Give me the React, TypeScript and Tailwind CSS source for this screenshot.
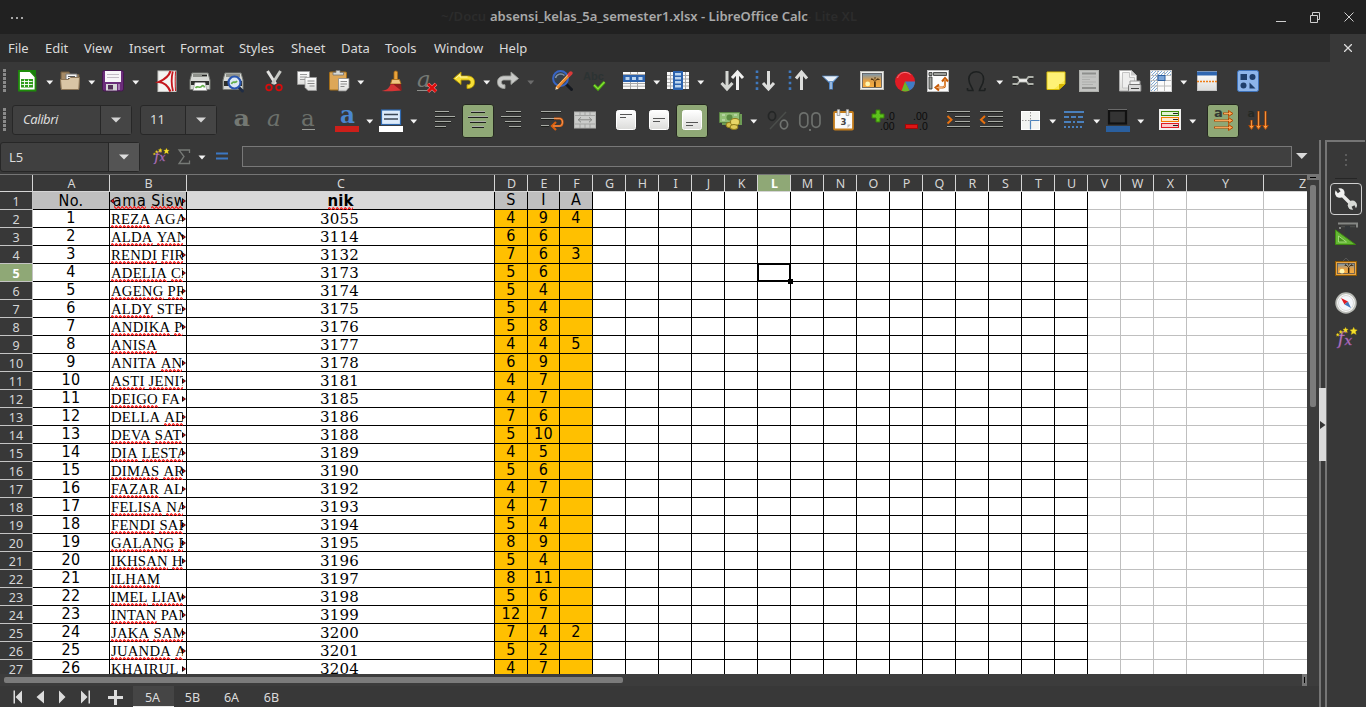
import type { ReactNode } from 'react';

type Kids = { children?: ReactNode };

/* ---------- small building blocks ---------- */

const Ico = ({ m, children }: Kids & { m: string }) => (
  <svg viewBox="0 0 24 24" className={`${m} h-6 w-6 shrink-0 overflow-visible`} fill="none">
    {children}
  </svg>
);

const Arrow = ({ m, dim }: { m: string; dim?: boolean }) => (
  <svg viewBox="0 0 8 24" className={`${m} h-6 w-2 shrink-0`}>
    <path d="M.3 11.5h6.9l-3.45 4z" fill={dim ? '#6c6c6c' : '#f4f4f4'} />
  </svg>
);

const Grip = () => (
  <svg viewBox="0 0 3 24" className="ml-[3px] h-6 w-[3px] shrink-0">
    {[0, 4, 8, 12, 16, 20].map((y) => (
      <rect key={y} y={y} width="3" height="3" fill="#8a8a8a" />
    ))}
  </svg>
);

const Active = ({ m, children }: Kids & { m: string }) => (
  <div className={`${m} -mt-1 flex h-[34px] w-8 shrink-0 justify-center rounded-[3px] border border-[#252820] bg-[#8fa876] pt-[3px]`}>
    {children}
  </div>
);

const Lines = ({ rows }: { rows: number[][] }) => (
  <>
    {rows.map(([x1, x2, y]) => (
      <g key={y}>
        <path d={`M${x1} ${y + 0.5}H${x2}`} stroke="#a9aca6" strokeWidth="1" />
        <path d={`M${x1} ${y + 1.5}H${x2}`} stroke="#1d1f1c" strokeWidth="1" />
      </g>
    ))}
  </>
);

const Picture = ({ x, y, w, h, frame }: { x: number; y: number; w: number; h: number; frame: string }) => (
  <>
    <rect x={x + 0.5} y={y + 0.5} width={w - 1} height={h - 1} fill={frame} stroke={frame === '#eeeeec' ? '#bdbdb8' : '#8f5902'} />
    <rect x={x + 2.5} y={y + 2.5} width={w - 5} height={h - 5} fill="url(#sunset)" stroke="#555" strokeWidth=".8" />
    <circle cx={x + w * 0.32} cy={y + h * 0.68} r="2.4" fill="#fff6b0" />
    <path
      d={`M${x + w * 0.62} ${y + h - 3}v-5.500l-3.500-3.500m3.500 3.500l3.500-3.500m-5 1.500h-2.500m4 0l.2-2.500m1.500 2.500h3`}
      stroke="#3b2408"
      strokeWidth=".8"
    />
    <path d={`M${x + w * 0.62} ${y + h - 3}v-5`} stroke="#3b2408" strokeWidth="1.400" />
  </>
);

const Defs = () => (
  <svg className="absolute h-0 w-0">
    <defs>
      <linearGradient id="sunset" x2="0" y2="1">
        <stop stopColor="#7796b0" />
        <stop offset=".5" stopColor="#e0a049" />
        <stop offset="1" stopColor="#fcaf3e" />
      </linearGradient>
      <linearGradient id="paper" x2="0" y2="1">
        <stop stopColor="#fff" />
        <stop offset="1" stopColor="#dcdcda" />
      </linearGradient>
      <pattern id="zig" width="4" height="3" patternUnits="userSpaceOnUse">
        <path d="M-1 3.200L1.200 .6 3.800 3.200 5.200 1.700" fill="none" stroke="#ff1414" strokeWidth="1.100" />
      </pattern>
      <pattern id="hatch" width="3" height="3" patternUnits="userSpaceOnUse">
        <path d="M0 3L3 0" stroke="#729fcf" strokeWidth=".9" />
      </pattern>
    </defs>
  </svg>
);

/* ---------- standard toolbar ---------- */

const StandardBar = () => (
  <div className="flex h-[39px] items-start pt-[7px]">
    <Grip />
    <Ico m="ml-[9px]">
      <path d="M4 2h11l5.500 6v13.500H4z" fill="#fff" stroke="#1e8c0a" strokeWidth="1.800" />
      <path d="M15 1h6v6z" fill="#18810b" />
      <rect x="6" y="10" width="12" height="8.500" fill="#2e9a1b" />
      <path d="M6.500 12.500h11M6.500 15.500h11M9.500 10.500v7.500M13.500 10.500v7.500" stroke="#fff" strokeWidth=".9" />
    </Ico>
    <Arrow m="ml-[7px]" />
    <Ico m="ml-1">
      <path d="M3 3h8l1.500 2.500H21V19H3z" fill="#a58a66" stroke="#6e5a3e" />
      <path d="M8 5h11v8H8z" fill="#f4f4f4" stroke="#777" />
      <path d="M10 7.500h7M10 9.500h7" stroke="#555" />
      <path d="M2.500 10.500h8l2-2h9l-.7 12H3.300z" fill="#d9c5a5" stroke="#8d7657" />
    </Ico>
    <Arrow m="ml-1.5" />
    <Ico m="ml-[5px]">
      <rect x="1.500" y="1.500" width="21" height="20.500" rx="2" fill="#6b2d7b" stroke="#44184f" />
      <rect x="4" y="2" width="16" height="11" fill="#f7f5f8" />
      <path d="M6 5.500h12M6 8.500h12" stroke="#c3bcc6" />
      <rect x="5" y="15" width="11" height="6.500" fill="#d7d7d7" />
      <rect x="7" y="16" width="5" height="4.500" fill="#523058" />
      <rect x="17" y="15" width="2" height="6" fill="#a779b3" />
    </Ico>
    <Arrow m="ml-[7px]" />
    <Ico m="ml-[15px]">
      <rect x="3" y="2" width="18" height="20.500" fill="#f3f3f1" stroke="#c9c9c6" />
      <path d="M15.500 2c-1.500 5-5 8-11.500 11 5 .5 9 4 11.500 9.500" stroke="#c4161c" strokeWidth="2.200" />
      <path d="M17.800 2.500c-1.500 6-1.500 13 .2 19.500" stroke="#c4161c" strokeWidth="1.800" />
      <path d="M20.500 2.500c-.4 6-.4 13 0 19.500" stroke="#c4161c" strokeWidth="1" />
    </Ico>
    <Ico m="ml-[9px]">
      <path d="M4 4h16l2 7v9.500H2V11z" fill="#d7d9d5" stroke="#777a75" />
      <path d="M5 5h14v3H5z" fill="#8d908a" />
      <path d="M14 6.500h5" stroke="#222" />
      <path d="M3 12h18v4H3z" fill="#2d2f2c" />
      <path d="M7 13.500h10l2 8H5z" fill="#fcfcfc" stroke="#999" strokeWidth=".7" />
      <path d="M7.500 19c2-3 4 1 6-1.500s3 1 3 1" stroke="#64b04b" strokeWidth="1.600" />
    </Ico>
    <Ico m="ml-[9px]">
      <path d="M4 4h16l2 7v9.500H2V11z" fill="#d7d9d5" stroke="#777a75" />
      <path d="M5 5h14v3H5z" fill="#8d908a" />
      <path d="M3 12h18v5H3z" fill="#2d2f2c" />
      <path d="M17.500 18l4 4" stroke="#1f2c44" strokeWidth="3" strokeLinecap="round" />
      <circle cx="13.500" cy="13.500" r="6" fill="#dbe8f4" stroke="#2a57b0" strokeWidth="2.200" />
      <path d="M10.500 15c1.500-4.500 3 .5 5.500-3" stroke="#64b04b" strokeWidth="1.800" />
    </Ico>
    <Ico m="ml-[17px]">
      <path d="M5.500 2l8.200 13" stroke="#e2e2e0" strokeWidth="3" />
      <path d="M18.500 2l-8.200 13" stroke="#c7c9c5" strokeWidth="3" />
      <circle cx="7" cy="18.500" r="2.800" stroke="#d40d0d" strokeWidth="1.800" />
      <circle cx="17" cy="18.500" r="2.800" stroke="#d40d0d" strokeWidth="1.800" />
    </Ico>
    <Ico m="ml-[9px]">
      <path d="M2.500 2.500h12v13h-12z" fill="url(#paper)" stroke="#999" strokeWidth=".8" />
      <path d="M5 5.500h7M5 8h7M5 10.500h5" stroke="#9a9a9a" />
      <path d="M10 8.500h11.500v13H13l-3-3z" fill="url(#paper)" stroke="#999" strokeWidth=".8" />
      <path d="M12.500 12h7M12.500 14.500h7M14.500 17h5" stroke="#8a8a8a" />
    </Ico>
    <Ico m="ml-2">
      <rect x="2.500" y="3" width="17" height="18" rx="1" fill="#dda758" stroke="#a46e18" />
      <path d="M6 3.500h3v-2h4v2h3.500V6H6z" fill="#d6d8d4" stroke="#777" strokeWidth=".8" />
      <path d="M11.500 9.500h10.500v9L19 22h-7.500z" fill="url(#paper)" stroke="#888" strokeWidth=".8" />
      <path d="M13.500 12.500h6.500M13.500 15h6.500M13.500 17.500h4" stroke="#8a8a8a" />
    </Ico>
    <Arrow m="ml-1.5" />
    <Ico m="ml-[15px]">
      <rect x="14" y="2" width="3.500" height="9" rx="1.500" fill="#e9a33c" stroke="#a86c14" strokeWidth=".8" />
      <path d="M12 10.500h7.500l1.500 4.500H10.500z" fill="#efc481" stroke="#a86c14" strokeWidth=".8" />
      <path d="M10.500 15h10.500l.8 6.500H13z" fill="#8f1d1d" />
      <path d="M10.500 15.500h3l7.500 6c-8 1-13.500.8-19.500.5 6-1 7.500-3 9-6.500z" fill="#d63535" />
    </Ico>
    <Ico m="ml-[11px]">
      <text x="2" y="18" fontFamily="DejaVu Serif" fontStyle="italic" fontSize="23" fill="#757974">a</text>
      <path d="M2 21.500h10" stroke="#8f918d" />
      <path d="M13 15l8 7.500M21 15l-8 7.500" stroke="#f5a3a3" strokeWidth="3.600" />
      <path d="M13 15l8 7.500M21 15l-8 7.500" stroke="#de0c0c" strokeWidth="2.500" />
    </Ico>
    <Ico m="ml-[13px]">
      <path d="M1.500 9.500L9 3v4h6.500c4.500 0 7 2.500 7 6 0 4.200-2.500 6.500-7.500 6.500v-3.700c2.500 0 3.500-.8 3.500-2.600 0-1.600-1-2.200-3-2.200H9v4.500z" fill="#f7df37" stroke="#b79b00" strokeWidth=".9" />
      <path d="M3.500 9.500l4.500-4v2.500h7.500" stroke="#fff8b5" />
    </Ico>
    <Arrow m="ml-[7px]" />
    <Ico m="ml-[5px]">
      <path d="M22.500 9.500L15 3v4H8.500c-4.500 0-7 2.500-7 6 0 4.200 2.500 6.500 7.500 6.500v-3.700c-2.500 0-3.500-.8-3.500-2.600 0-1.600 1-2.200 3-2.200H15v4.500z" fill="#c9cac8" stroke="#9c9e9a" strokeWidth=".9" />
    </Ico>
    <Arrow m="ml-[7px]" dim />
    <Ico m="ml-[15px]">
      <path d="M16.500 15.500l5 5" stroke="#14181f" strokeWidth="3" strokeLinecap="round" />
      <circle cx="10.500" cy="9.500" r="7.400" fill="#36404c" stroke="#3764c4" strokeWidth="2" />
      <path d="M5.500 9c1-4 6-5.500 9-2.500" stroke="#7f90a4" strokeWidth="1.500" />
      <path d="M6.500 19.500L19 6" stroke="#e9862a" strokeWidth="3.200" />
      <path d="M19 6l1.800-1.800" stroke="#d93a3a" strokeWidth="3.800" strokeLinecap="round" />
      <path d="M7 17.500L18 5.800" stroke="#fbc27f" strokeWidth=".9" />
      <path d="M5.200 20.800l1-3 2 2z" fill="#f4e4c5" />
    </Ico>
    <Ico m="ml-[9px]">
      <text x="0" y="10.500" fontFamily="Liberation Sans" fontWeight="bold" fontSize="11" fill="#2c3333">Abc</text>
      <path d="M11 16l4 4L21.500 13" stroke="#4aa510" strokeWidth="3" />
      <path d="M11 16l4 4L21.500 13" stroke="#86e034" strokeWidth="1.200" />
    </Ico>
    <Ico m="ml-[15px]">
      <rect x="1" y="3" width="22" height="17" fill="#f8f8f8" />
      <path d="M1 5.500h22M1 14.500h22M1 17.200h22M8.500 3v17M15.500 3v17" stroke="#a8a8a8" />
      <rect x="1" y="6" width="22" height="7" fill="#2b62ae" />
      <path d="M3.500 8h4v3h-4zM10 8h4v3h-4zM16.500 8h4v3h-4z" fill="#b9d4f0" />
    </Ico>
    <Arrow m="ml-[7px]" />
    <Ico m="ml-[5px]">
      <rect x="1" y="3" width="22" height="17" fill="#f8f8f8" />
      <path d="M1 6.500h22M1 10h22M1 13.500h22M1 17h22M4.500 3v17M19.500 3v17" stroke="#a8a8a8" />
      <rect x="7" y="2" width="10" height="19" fill="#2b62ae" />
      <path d="M9 4h6v2.500H9zM9 8h6v2.500H9zM9 12h6v2.500H9zM9 16h6v2.500H9z" fill="#b9d4f0" />
    </Ico>
    <Arrow m="ml-[7px]" />
    <Ico m="ml-[15px]">
      <path d="M7 2v17M1.500 14L7 20l5.500-6" stroke="#d5d7d3" strokeWidth="3" />
      <path d="M17.500 21V4M12 9l5.500-6L23 9" stroke="#f1f1f0" strokeWidth="3" />
    </Ico>
    <Ico m="ml-[9px]">
      <path d="M4 1.500v20" stroke="#3f78bd" strokeWidth="2.600" strokeDasharray="2.600 3" />
      <path d="M15.500 2v17M10 14l5.500 6 5.500-6" stroke="#dcdddb" strokeWidth="3" />
    </Ico>
    <Ico m="ml-[9px]">
      <path d="M4 1.500v20" stroke="#3f78bd" strokeWidth="2.600" strokeDasharray="2.600 3" />
      <path d="M15.500 21V4M10 9.500L15.500 3 21 9.500" stroke="#dcdddb" strokeWidth="3" />
    </Ico>
    <Ico m="ml-[9px]">
      <path d="M3 7h17l-6 7v6.500h-4V14z" fill="#4f84c4" />
      <path d="M3.500 7h16L14 12.500H9.500z" fill="#e8f0f8" stroke="#5a86ba" strokeWidth=".7" />
      <path d="M12 13v7" stroke="#dfeaf5" />
    </Ico>
    <Ico m="ml-[17px]">
      <Picture x={0} y={2} w={24} h={19} frame="#eeeeec" />
    </Ico>
    <Ico m="ml-[9px]">
      <circle cx="12" cy="12.500" r="10" fill="#e01b24" />
      <path d="M12 12.500L22 12.500A10 10 0 0 1 16.500 21.500z" fill="#3f7cc4" />
      <path d="M12 12.500L16.500 21.500A10 10 0 0 1 8.500 21.800z" fill="#6cb62a" />
      <path d="M4.500 9a8 8 0 0 1 13-3.500" stroke="#f5797e" />
    </Ico>
    <Ico m="ml-[9px]">
      <rect x="1.500" y="1.500" width="21" height="21" fill="#fcfcfc" stroke="#bbb" />
      <path d="M3 3.500h3v3H3zM7.500 3.500h13v3h-13zM3 8h3v12H3z" fill="#9b9d99" stroke="#2f302e" strokeWidth=".8" />
      <path d="M19 9.500v6.500c0 1.500-1 2.500-2.500 2.500H10M16 12.500l3-3.500 3 3.500M13 15.500L9.500 18.500l3.500 3" stroke="#c75a05" strokeWidth="2" />
      <path d="M19 10v6c0 1.500-1 2.500-2.500 2.500h-6" stroke="#ffc78e" strokeWidth=".8" />
    </Ico>
    <Ico m="ml-3.5">
      <path d="M3.500 21.500H9C8.800 19 4.800 15.500 4.800 10 4.800 5.500 8 2.800 12.200 2.800S19.600 5.500 19.600 10c0 5.500-4 9-4.200 11.500h5.500M3.500 19v2.500M21 19v2.500" stroke="#1d2020" strokeWidth="1.600" />
    </Ico>
    <Arrow m="ml-[7.500px]" />
    <Ico m="ml-[7px]">
      <path d="M1.500 8h5l2 2.500h7l2-2.500h5M1.500 15h5l2-2.500h7l2 2.500h5" stroke="#aeb1aa" strokeWidth="1.900" />
      <path d="M8 11.500h8" stroke="#eeeeec" strokeWidth="2.500" />
      <path d="M2 9.500h3M18.500 9.500h3M2 16.500h3M18.500 16.500h3" stroke="#20211f" />
    </Ico>
    <Ico m="ml-[9px]">
      <path d="M3 3h18v12l-6 5.500H3z" fill="#fbe94d" stroke="#d8bb00" />
      <path d="M3.500 3.500h17v8L10 20H3.500z" fill="#fff487" opacity=".7" />
      <path d="M15 20.500V15h6z" fill="#d4b400" />
    </Ico>
    <Ico m="ml-[9px]">
      <rect x="2.500" y="1.500" width="19" height="21" fill="#c3c4c2" stroke="#aeb0ac" />
      <path d="M5 4.500h14M5 19h14" stroke="#8e8f8d" strokeWidth="2" />
      <path d="M5 8h14M5 10.500h8M5 13h14M5 15.500h11" stroke="#aeafad" />
    </Ico>
    <Ico m="ml-[17px]">
      <path d="M1.500 1.500h12l5 5V22h-17z" fill="url(#paper)" stroke="#aaa" />
      <path d="M4.500 3.500h7v5h5V19h-12z" fill="#eee" stroke="#c4c4c4" />
      <path d="M13 1.500v5h5.500z" fill="#c9c9c9" />
      <path d="M12 12h10v5H12z" fill="#f2f2f2" stroke="#999" />
      <rect x="10.500" y="15.500" width="12.500" height="7" rx="1" fill="#dadada" stroke="#777" />
      <path d="M13 19.500h8" stroke="#444" />
    </Ico>
    <Ico m="ml-[7px]">
      <rect x="1.500" y="1.500" width="21" height="21" fill="#fbfbfb" stroke="#ccc" />
      <rect x="2" y="2" width="6" height="20" fill="url(#hatch)" />
      <rect x="8" y="2" width="14" height="5" fill="url(#hatch)" />
      <path d="M8.500 2v20M15.500 2v20M2 6.500h20M2 11.500h20M2 17h20" stroke="#bcbcbc" />
      <rect x="9" y="6.500" width="7" height="5" fill="#7ba5d8" stroke="#2d5f9f" />
    </Ico>
    <Arrow m="ml-[7px]" />
    <Ico m="ml-[7px]">
      <rect x="2.500" y="2.500" width="19" height="19" fill="url(#paper)" stroke="#c4c4c4" />
      <rect x="2" y="2.500" width="20" height="4" fill="#2f66b0" />
      <path d="M2 12.500h20" stroke="#ee7d14" strokeWidth="1.300" strokeDasharray="2 1" />
    </Ico>
    <Ico m="ml-[17px]">
      <rect x="1.500" y="1.500" width="21" height="21" rx="2" fill="#8db5ea" stroke="#3d71b8" />
      <path d="M4.500 5h6.500v6H4.500z" fill="#1f3f6b" />
      <circle cx="16.500" cy="8" r="3" fill="#1f3f6b" />
      <circle cx="7.500" cy="16.500" r="3" fill="#1f3f6b" />
      <path d="M13.500 13.500l6 6h-6z" fill="#1f3f6b" />
    </Ico>
  </div>
);

/* ---------- formatting toolbar ---------- */

const Combo = ({ m, label, side, italic }: { m: string; label: string; side: string; italic?: boolean }) => (
  <div className={`${m} -mt-[3px] flex h-[30px] shrink-0 rounded-[3px] border border-[#272727] bg-[#404040]`}>
    <div className={`flex flex-1 items-center text-[13px] text-[#dcdcdc] ${italic ? 'pl-[10px] italic tracking-[-0.4px]' : 'pl-[9px]'}`}>{label}</div>
    <div className={`${side} flex items-center justify-center border-l border-[#272727] bg-[#454545]`}>
      <svg viewBox="0 0 10 6" className="h-1.5 w-2.5">
        <path d="M0 .5h10L5 5.500z" fill="#d4d4d4" />
      </svg>
    </div>
  </div>
);

const FormatBar = () => (
  <div className="flex h-[39px] items-start pt-[7px]">
    <Grip />
    <Combo m="ml-1.5 w-[120px]" label="Calibri" side="w-[31px]" italic />
    <Combo m="ml-2 w-[77px]" label="11" side="w-[31px]" />
    <Ico m="ml-[13px]">
      <text x="3.500" y="17.500" fontFamily="DejaVu Serif" fontWeight="bold" fontSize="22" textLength="16.500" lengthAdjust="spacingAndGlyphs" fill="#747873">a</text>
    </Ico>
    <Ico m="ml-[9px]">
      <text x="4" y="17.500" fontFamily="DejaVu Serif" fontStyle="italic" fontSize="23" fill="#6c706b">a</text>
    </Ico>
    <Ico m="ml-[9px]">
      <text x="5" y="17.500" fontFamily="DejaVu Serif" fontSize="23" fill="#6c706b">a</text>
      <path d="M6 21.500h13" stroke="#9b9d99" />
    </Ico>
    <Ico m="ml-[15px]">
      <text x="5" y="15" fontFamily="DejaVu Serif" fontWeight="bold" fontSize="24" textLength="15" lengthAdjust="spacingAndGlyphs" fill="#4a86cf">a</text>
      <rect y="18" width="24" height="6" fill="#cc1f1a" />
    </Ico>
    <Arrow m="ml-[7px]" />
    <Ico m="ml-[5px]">
      <rect x="2.500" y="2" width="19" height="14.500" fill="#dceafa" stroke="#2f69b0" strokeWidth="1.200" />
      <path d="M5 6.500h14M5 11h14" stroke="#3b4654" strokeWidth="1.600" />
      <rect y="18" width="24" height="6" fill="#fff" />
    </Ico>
    <Arrow m="ml-[7px]" />
    <Ico m="ml-[15px]">
      <Lines rows={[[2, 16, 3], [2, 22, 8], [2, 18, 13], [2, 13, 18]]} />
    </Ico>
    <Active m="ml-[5px]">
      <Ico m="">
        <Lines rows={[[5, 19, 3], [2, 22, 8], [4, 20, 13], [6, 18, 18]]} />
      </Ico>
    </Active>
    <Ico m="ml-1.5">
      <Lines rows={[[6, 21, 3], [1, 21, 8], [5, 21, 13], [9, 21, 18]]} />
    </Ico>
    <Ico m="ml-4">
      <Lines rows={[[1, 21, 3], [1, 16, 10], [1, 9, 17]]} />
      <path d="M14 10.500h5.500c4 0 4 7.500 0 7.500H13M16 14l-4 4 4 4" stroke="#d95f0e" strokeWidth="2.200" />
      <path d="M14 10.500h5.500c4 0 4 7.500 0 7.500H13" stroke="#fcb07a" strokeWidth=".7" />
    </Ico>
    <Ico m="ml-[9px]">
      <rect x="1.500" y="4" width="21" height="16" fill="#cbccca" stroke="#b3b4b2" />
      <path d="M2 7.500h20M2 16h20M7 4v3.500M12 4v3.500M17 4v3.500M7 16v4M12 16v4M17 16v4" stroke="#a3a4a2" />
      <path d="M5 11.800h14M8 9.300l-2.700 2.500L8 14.300M16 9.300l2.700 2.500-2.700 2.500" stroke="#858784" />
    </Ico>
    <Ico m="ml-[17px]">
      <rect x="2.500" y="2.500" width="19" height="19" rx="2" fill="url(#paper)" stroke="#fff" />
      <path d="M6 6.500h12M6 9.500h6" stroke="#555" />
    </Ico>
    <Ico m="ml-[9px]">
      <rect x="2.500" y="2.500" width="19" height="19" rx="2" fill="url(#paper)" stroke="#fff" />
      <path d="M6 10.500h12M6 13.500h7" stroke="#555" />
    </Ico>
    <Active m="ml-[5px]">
      <Ico m="">
        <rect x="2.500" y="2.500" width="19" height="19" rx="2" fill="url(#paper)" stroke="#fff" />
        <path d="M6 14.500h12M6 17.500h7" stroke="#555" />
      </Ico>
    </Active>
    <Ico m="ml-[11px]">
      <path d="M3 6h20v11H3z" fill="#6d9c55" />
      <path d="M.5 4.500h20v10h-20z" fill="#93bf76" stroke="#5b8645" />
      <circle cx="10.500" cy="9.500" r="3" fill="#5c8c42" />
      <path d="M3 7h3M3 12h3M15 7h3" stroke="#d5e7c8" />
      <ellipse cx="11" cy="17" rx="4" ry="2.800" fill="#d9c24a" stroke="#8d7a1a" />
      <ellipse cx="16" cy="14" rx="4.500" ry="3.500" fill="#e8d667" stroke="#8d7a1a" />
      <ellipse cx="15" cy="19" rx="4" ry="2.500" fill="#dfca58" stroke="#8d7a1a" />
    </Ico>
    <Arrow m="ml-[7px]" />
    <Ico m="ml-2">
      <path d="M4 21L20 4" stroke="#4b4e4b" strokeWidth="1.500" />
      <ellipse cx="6" cy="8" rx="3.600" ry="4.300" stroke="#242626" strokeWidth="1.700" />
      <ellipse cx="18" cy="16.500" rx="3.600" ry="4.300" stroke="#707370" strokeWidth="1.700" />
    </Ico>
    <Ico m="ml-2">
      <rect x="1.800" y="4.800" width="8" height="14.500" rx="4" stroke="#6d706d" strokeWidth="1.700" />
      <rect x="14" y="4.800" width="8" height="14.500" rx="4" stroke="#6d706d" strokeWidth="1.700" />
      <rect x="11" y="21" width="2" height="2" fill="#6d706d" />
    </Ico>
    <Ico m="ml-[9px]">
      <rect x="3" y="4" width="19" height="17.500" rx="1" fill="#fafafa" stroke="#c47d1c" strokeWidth="1.800" />
      <path d="M7.500 1.500v6M16.500 1.500v6" stroke="#eee" strokeWidth="2.600" />
      <path d="M6.200 2v5.500h2.600V2M15.200 2v5.500h2.600V2" stroke="#888" strokeWidth=".7" />
      <text x="9.500" y="16.500" fontFamily="DejaVu Sans" fontSize="8.500" fontWeight="bold" fill="#444">3</text>
      <path d="M16.500 20v-3.500H20z" fill="#bbb" />
    </Ico>
    <Ico m="ml-4">
      <path d="M5 2h4v4h4v4H9v4H5v-4H1V6h4z" fill="#5dc31c" stroke="#387f0a" />
      <text x="15" y="12" fontFamily="Liberation Sans" fontSize="10.500" fill="#0c0c0c">.0</text>
      <text x="9" y="22" fontFamily="Liberation Sans" fontSize="10.500" fill="#0c0c0c">.00</text>
    </Ico>
    <Ico m="ml-[9px]">
      <text x="9" y="12" fontFamily="Liberation Sans" fontSize="10.500" fill="#0c0c0c">.00</text>
      <text x="15" y="22" fontFamily="Liberation Sans" fontSize="10.500" fill="#0c0c0c">.0</text>
      <rect x="1.500" y="16.500" width="12" height="4" fill="#dd1515" stroke="#9d0808" />
    </Ico>
    <Ico m="ml-[18px]">
      <Lines rows={[[1, 24, 3], [9, 24, 8], [9, 24, 13], [1, 24, 18]]} />
      <path d="M1.500 8l4 3.800-4 3.700" stroke="#e8700c" strokeWidth="2" />
    </Ico>
    <Ico m="ml-[9px]">
      <Lines rows={[[1, 24, 3], [9, 24, 8], [9, 24, 13], [1, 24, 18]]} />
      <path d="M6 8l-4 3.800L6 15.500" stroke="#e8700c" strokeWidth="2" />
    </Ico>
    <Ico m="ml-4">
      <rect x="2.500" y="3.500" width="18" height="18" fill="#f3f4f2" stroke="#fff" />
      <path d="M11.500 4v9M3 12.500h9" stroke="#999" strokeDasharray="1.500 1.500" />
      <path d="M11.500 12.500h9M11.500 12.500v9" stroke="#4f83bb" strokeWidth="1.200" />
    </Ico>
    <Arrow m="ml-1.5" />
    <Ico m="ml-[5px]">
      <path d="M2 4h20" stroke="#4a80bd" strokeWidth="2" />
      <path d="M2 9h20" stroke="#4a80bd" strokeWidth="2" strokeDasharray="5 2" />
      <path d="M2 14h20" stroke="#4a80bd" strokeWidth="2" strokeDasharray="7 2 2 2" />
      <path d="M2 19h20" stroke="#4a80bd" strokeWidth="2" strokeDasharray="2 2" />
    </Ico>
    <Arrow m="ml-[7px]" />
    <Ico m="ml-[5px]">
      <rect x="3" y="2.500" width="17" height="13" fill="#343434" stroke="#111" strokeWidth="2.200" />
      <path d="M2 1.500h19" stroke="#6a6a6a" />
      <rect y="18" width="24" height="6" fill="#2a5f9e" />
    </Ico>
    <Arrow m="ml-[7px]" />
    <Ico m="ml-[13px]">
      <rect x="1" y="1" width="22" height="21" fill="#f0f0ef" />
      <rect x="3.500" y="3.500" width="17" height="4" fill="#e2f3d4" stroke="#3f8b09" />
      <rect x="3.500" y="9.500" width="17" height="4" fill="#ffe9cf" stroke="#f57900" />
      <rect x="3.500" y="15.500" width="17" height="4" fill="#fbc9cb" stroke="#e01b24" />
      <path d="M15 5.500h5M15 11.500h5M15 17.500h5" stroke="#222" />
    </Ico>
    <Arrow m="ml-[7px]" />
    <Active m="ml-2.5">
      <Ico m="">
        <text x="3" y="9" fontFamily="DejaVu Sans" fontWeight="bold" fontSize="13" fill="#333a33">a</text>
        <path d="M12 5.500h9M3 12.500h18M3 19.500h18" stroke="#b54c05" strokeWidth="2.200" />
        <path d="M17.500 2.500l4.500 3-4.500 3zM17.500 9.500l4.500 3-4.500 3zM17.500 16.500l4.500 3-4.500 3z" fill="#f7a04b" stroke="#b54c05" />
        <path d="M13 5.500h7M4 12.500h16M4 19.500h16" stroke="#ffad61" strokeWidth=".9" />
      </Ico>
    </Active>
    <Ico m="ml-[7px]">
      <text x="1.500" y="9" fontFamily="DejaVu Sans" fontWeight="bold" fontSize="11" fill="#252a25">a</text>
      <path d="M5.500 12v8M12.500 3v17M19.500 3v17" stroke="#b54c05" strokeWidth="2.200" />
      <path d="M2.800 17.500h5.400L5.500 21.500zM9.800 17.500h5.400L12.500 21.500zM16.800 17.500h5.400L19.500 21.500z" fill="#f7a04b" stroke="#b54c05" />
      <path d="M5.500 12.500v7M12.500 3.500v16M19.500 3.500v16" stroke="#ff9a40" strokeWidth=".9" />
    </Ico>
  </div>
);

/* ---------- formula bar ---------- */

const star = (x: number, y: number, r: number) =>
  `M${x} ${y - r}l${r * 0.3} ${r * 0.65} ${r * 0.7} ${r * 0.1}-${r * 0.5} ${r * 0.5} ${r * 0.2} ${r * 0.75}-${r * 0.7}-${r * 0.35}-${r * 0.7} ${r * 0.35} ${r * 0.2}-${r * 0.75}-${r * 0.5}-${r * 0.5} ${r * 0.7}-${r * 0.1}z`;

const Fx = ({ cls }: { cls: string }) => (
  <svg viewBox="0 0 22 22" className={`${cls} shrink-0 overflow-visible`}>
    <text x="2" y="17.500" fontFamily="DejaVu Serif" fontStyle="italic" fontSize="17" fill="#c48bce" stroke="#8d4f9d" strokeWidth=".5">f</text>
    <text x="9" y="18.500" fontFamily="DejaVu Serif" fontStyle="italic" fontSize="14" fill="#c48bce" stroke="#8d4f9d" strokeWidth=".5">x</text>
    <path d={`${star(18.5, 4, 3.8)}${star(10, 3, 2.7)}${star(5, 5, 1.8)}${star(1.8, 8, 1.6)}`} fill="#f5df2d" stroke="#c9ac00" strokeWidth=".4" />
  </svg>
);

const FormulaBar = () => (
  <div className="flex h-[34px] items-start">
    <div className="mt-0.5 flex h-[30px] w-[140px] shrink-0 rounded-[3px] border border-[#272727] bg-[#404040]">
      <div className="flex flex-1 items-center pl-2 pt-0.5 text-[13px] text-[#dcdcdc]">L5</div>
      <div className="flex w-[31px] items-center justify-center border-l border-[#272727] bg-[#545454]">
        <svg viewBox="0 0 10 6" className="h-1.5 w-2.5"><path d="M0 .5h10L5 5.500z" fill="#dcdcdc" /></svg>
      </div>
    </div>
    <Fx cls="ml-[13px] mt-2 h-4 w-4" />
    <svg viewBox="0 0 14 16" className="ml-2 mt-[9px] h-4 w-3.5 shrink-0">
      <path d="M12.500 4V1H2l5 6.500L2 14.500h10.500v-3" fill="none" stroke="#767976" strokeWidth="1.300" />
    </svg>
    <svg viewBox="0 0 8 24" className="ml-[7px] mt-[3px] h-6 w-2 shrink-0"><path d="M.5 12.500h7L4 16.500z" fill="#f4f4f4" /></svg>
    <svg viewBox="0 0 12 9" className="ml-2.5 mt-3 h-[9px] w-3 shrink-0">
      <path d="M0 1.500h12M0 6.500h12" stroke="#3c78c4" strokeWidth="2.200" />
    </svg>
    <div className="ml-3.5 mt-1.5 h-[21px] w-[1050px] border border-[#787878] bg-[#404040]" />
    <svg viewBox="0 0 12 7" className="ml-1 mt-3 h-[7px] w-3 shrink-0"><path d="M0 1h11.500L5.750 7z" fill="#d9d9d9" /></svg>
  </div>
);

/* ---------- sheet ---------- */

const COLS = 'grid grid-cols-[33px_77px_77px_308px_33px_32px_33px_repeat(18,33px)_77px_77px]';
const letters = 'ABCDEFGHIJKLMNOPQRSTUVWXYZ'.split('');

/* name words ending in "~" are unknown to the spell checker */
const rows: [string, number, number, number, number?][] = [
  ['REZA~ AGA', 3055, 4, 9, 4],
  ['ALDA~ YAN~', 3114, 6, 6],
  ['RENDI~ FIR~', 3132, 7, 6, 3],
  ['ADELIA~ CI~', 3173, 5, 6],
  ['AGENG~ PR~', 3174, 5, 4],
  ['ALDY~ STE', 3175, 5, 4],
  ['ANDIKA~ P~', 3176, 5, 8],
  ['ANISA~', 3177, 4, 4, 5],
  ['ANITA AN~', 3178, 6, 9],
  ['ASTI~ JENIT~', 3181, 4, 7],
  ['DEIGO~ FA', 3185, 4, 7],
  ['DELLA AD~', 3186, 7, 6],
  ['DEVA~ SAT~', 3188, 5, 10],
  ['DIA~ LESTA~', 3189, 4, 5],
  ['DIMAS~ AR~', 3190, 5, 6],
  ['FAZAR~ AL', 3192, 4, 7],
  ['FELISA~ NA~', 3193, 4, 7],
  ['FENDI~ SAP~', 3194, 5, 4],
  ['GALANG~ P~', 3195, 8, 9],
  ['IKHSAN~ H~', 3196, 5, 4],
  ['ILHAM~', 3197, 8, 11],
  ['IMEL~ LIAW~', 3198, 5, 6],
  ['INTAN~ PAN', 3199, 12, 7],
  ['JAKA~ SAM~', 3200, 7, 4, 2],
  ['JUANDA~ A~', 3201, 5, 2],
  ['KHAIRUL', 3204, 4, 7],
];

const Word = ({ w, z }: { w: string; z: string }) =>
  w.endsWith('~') ? (
    <span className="relative">
      {w.slice(0, -1)}
      <svg className={`absolute left-0 ${z} h-[3px] w-full`}>
        <rect width="100%" height="3" fill="url(#zig)" />
      </svg>
    </span>
  ) : (
    <span>{w}</span>
  );

const More = ({ left }: { left?: boolean }) => (
  <svg viewBox="0 0 4 6" className={`absolute top-[6px] h-1.5 w-1 ${left ? 'left-0' : 'right-0'}`}>
    {left ? <path d="M4 0v6L0 3z" fill="#000" /> : <path d="M0 0v6l4-3z" fill="#000" />}
    <path d={left ? 'M3.600 1v4L1 3z' : 'M1.200 1.500v3l2-1.500z'} fill="#e01b24" />
  </svg>
);

const SANS = "font-['DejaVu_Sans_Condensed','DejaVu_Sans',sans-serif] text-[16px] tracking-[0.35px]";
const BORDER = 'relative h-[18px] border-b border-r border-black whitespace-nowrap text-center text-black';

const RowHead = ({ n }: { n: number }) => (
  <div
    className={`flex h-[18px] justify-center border-b border-r border-[#c4c4c4] text-[12.500px] leading-[19px] ${
      n === 5 ? 'bg-[#8fa876] font-bold text-white' : 'bg-[#383838] text-[#d6d6d6]'
    }`}
  >
    {n}
  </div>
);

const Blank = ({ row }: { row: number }) => (
  <>
    {letters.slice(6).map((l, i) => (
      <div key={l} className={`relative h-[18px] border-b border-r bg-white ${i < 15 ? 'border-black' : 'border-[#bfbfbf]'}`}>
        {row === 5 && l === 'L' && (
          <div className="absolute -left-px -top-px z-10 h-[19px] w-[34px] border-2 border-black">
            <div className="absolute -bottom-[4px] -right-[4px] h-[5px] w-[5px] bg-black" />
          </div>
        )}
      </div>
    ))}
  </>
);

const Sheet = () => (
  <div className="flex h-[500px]">
    <div className="h-[500px] w-[1307px] overflow-hidden bg-white">
      <div className={`${COLS} h-[18px] w-[1340px] border-t border-[#757575] bg-[#383838]`}>
        <div className="h-[17px] border-b border-r border-[#d5d5d5]" />
        {letters.map((l) => (
          <div
            key={l}
            className={`flex h-[17px] justify-center border-b border-r border-[#d5d5d5] pl-px text-[12.500px] leading-[17px] ${
              l === 'L' ? 'bg-[#8fa876] font-bold text-white' : 'text-[#d6d6d6]'
            }`}
          >
            {l}
          </div>
        ))}
      </div>
      <div className={`${COLS} w-[1340px]`}>
        <RowHead n={1} />
        <div className={`${BORDER} ${SANS} bg-[#bfbfbf] leading-[17px]`}>No.</div>
        <div className={`${BORDER} ${SANS} bg-[#bfbfbf] leading-[17px]`}>
          <div className="ml-1 mr-[3px] flex justify-center tracking-[0.6px] [overflow-x:clip]">
            <div className="flex gap-[5px]">
              <Word w="Nama~" z="top-[14px]" />
              <Word w="Siswa~" z="top-[14px]" />
            </div>
          </div>
          <More left />
          <More />
        </div>
        <div className={`${BORDER} bg-[#d9d9d9] font-['DejaVu_Sans'] text-[15px] font-bold leading-[19px]`}>
          <Word w="nik~" z="top-[15px]" />
        </div>
        {['S', 'I', 'A'].map((t) => (
          <div key={t} className={`${BORDER} ${SANS} bg-[#bfbfbf] leading-[15px]`}>{t}</div>
        ))}
        <Blank row={1} />
        {rows.map(([name, nik, s, i, a], k) => (
          <div key={nik} className="contents">
            <RowHead n={k + 2} />
            <div className={`${BORDER} ${SANS} bg-white leading-[15px]`}>{k + 1}</div>
            <div className={`${BORDER} bg-white font-['Liberation_Serif',serif] text-[14.670px] leading-[19px] tracking-[0.25px]`}>
              <div className="ml-px mr-[3px] flex gap-[4px] [overflow-x:clip]">
                {name.split(' ').map((w) => (
                  <Word key={w} w={w} z="top-[15px]" />
                ))}
              </div>
              {name !== 'ANISA~' && name !== 'ILHAM~' && <More />}
            </div>
            <div className={`${BORDER} bg-white pr-0.5 font-['DejaVu_Serif',serif] text-[15px] leading-[19px] tracking-[0.15px]`}>{nik}</div>
            {[s, i, a].map((v, j) => (
              <div key={j} className={`${BORDER} ${SANS} bg-[#ffc000] leading-[15px]`}>{v ?? ''}</div>
            ))}
            <Blank row={k + 2} />
          </div>
        ))}
      </div>
    </div>
    <div className="flex w-3 flex-col items-center border-t border-[#757575] bg-[#3c3c3c]">
      <div className="flex h-[5px] w-full items-center justify-center bg-[#757575]">
        <div className="h-px w-1.5 bg-black" />
      </div>
      <div className="mt-[5px] h-[222px] w-1.5 rounded-[2px] bg-[#7b7b7b]" />
    </div>
  </div>
);

/* ---------- bottom ---------- */

const Bottom = () => (
  <>
    <div className="flex h-3 items-center bg-[#3c3c3c]">
      <div className="ml-1 h-1.5 w-[619px] rounded-[2px] bg-[#7b7b7b]" />
      <div className="ml-[679px] flex h-3 w-[5px] items-center justify-center bg-[#757575]">
        <div className="h-1.5 w-px bg-black" />
      </div>
    </div>
    <div className="flex h-[21px] items-center text-[12.500px] leading-[23px] text-[#dcdcdc]">
      <svg viewBox="0 0 125 21" className="h-[21px] w-[125px] shrink-0" fill="#dcdcdc">
        <path d="M13.500 4.500h1.500v13h-1.500zM22 4.500v13L15.500 11zM44 4.500v13L36.500 11zM59 4.500v13l6.500-6.500zM81 4.500v13l6.500-6.500zM88.500 4.500H90v13h-1.500zM114 4h3v6h6v3h-6v6h-3v-6h-6v-3h6z" />
      </svg>
      <div className="ml-2 h-[21px] w-[41px] border-b border-[#e6e6e6] bg-[#454545] pr-0.5 text-center">5A</div>
      <div className="h-[21px] w-[39px] pr-0.5 text-center">5B</div>
      <div className="h-[21px] w-[39px] pr-0.5 text-center">6A</div>
      <div className="h-[21px] w-[41px] pr-0.5 text-center">6B</div>
    </div>
  </>
);

const Sidebar = () => (
  <div className="flex flex-1">
    <div className="flex h-[567px] w-2 flex-col justify-start border-x-2 border-[#757575]">
      <div className="relative -left-0.5 mt-[248px] flex h-[73px] w-[7px] items-center bg-[#dadada]">
        <svg viewBox="0 0 6 8" className="ml-px h-2 w-1.5"><path d="M0 0l5.500 4L0 8z" fill="#333" /></svg>
      </div>
    </div>
    <div className="mr-px flex flex-1 flex-col items-center border-t-2 border-[#757575]">
      <svg viewBox="0 0 2 12" className="mt-3 h-3 w-0.5" fill="#5c5c5c">
        <path d="M0 0h2v2H0zM0 5h2v2H0zM0 10h2v2H0z" />
      </svg>
      <div className="mt-3 h-px w-[22px] bg-[#262626]" />
      <div className="mt-1 flex h-8 w-8 shrink-0 items-center justify-center rounded-[4px] border border-[#d0d0d0]">
        <svg viewBox="0 0 24 24" className="h-6 w-6" fill="none">
          <path d="M6.500 6.500l11 11" stroke="#e9e9e7" strokeWidth="3.400" />
          <circle cx="5.800" cy="6" r="4.800" fill="#f1f1f0" />
          <circle cx="18.400" cy="18.200" r="4.600" fill="#d8dad6" />
          <path d="M5.200 5.200L.5-1" stroke="#383838" strokeWidth="3.400" />
          <path d="M19 19l3 6" stroke="#383838" strokeWidth="3.200" />
        </svg>
      </div>
      <svg viewBox="0 0 24 24" className="mt-[7px] h-6 w-6 shrink-0">
        <path d="M4 1.500h19v4M6 5v2" stroke="#858784" strokeWidth="2" fill="none" />
        <path d="M7 4.500h14" stroke="#4a4c4a" strokeWidth="1.500" />
        <path d="M11 4h5v18h-5z" fill="#33373a" />
        <path d="M1.500 8v14.500h20z" fill="#64b733" stroke="#3f8b12" />
        <path d="M4.500 14v6h8z" fill="#4b9422" stroke="#b1e58c" strokeWidth=".8" />
      </svg>
      <svg viewBox="0 0 24 24" className="mt-[11px] h-6 w-6 shrink-0" fill="none">
        <path d="M9 4l3-3 3 3" stroke="#555" />
        <Picture x={1} y={4} w={22} h={15} frame="#e9a545" />
      </svg>
      <svg viewBox="0 0 24 24" className="mt-[10px] h-6 w-6 shrink-0">
        <circle cx="12" cy="12" r="9.800" fill="#fafafa" stroke="#b9bbb6" strokeWidth="1.800" />
        <circle cx="12" cy="12" r="7.500" fill="#f3f6fb" stroke="#cfd1cd" strokeWidth=".8" />
        <path d="M7 7l7 3.500-3.500 3z" fill="#e01b24" />
        <path d="M17 17l-3-6.500-3.500 3z" fill="#3f76bd" />
      </svg>
      <Fx cls="mt-3 h-[21px] w-[21px]" />
    </div>
  </div>
);

const menus: [string, string][] = [
  ['File', 'w-[37px]'], ['Edit', 'w-[39px]'], ['View', 'w-[45px]'], ['Insert', 'w-[51px]'], ['Format', 'w-[59px]'],
  ['Styles', 'w-[52px]'], ['Sheet', 'w-[50px]'], ['Data', 'w-[44px]'], ['Tools', 'w-[49px]'], ['Window', 'w-[65px]'], ['Help', 'w-[40px]'],
];

export default function App() {
  return (
    <div className="h-[707px] w-[1366px] overflow-hidden bg-[#383838] font-['Noto_Sans',sans-serif]">
      <Defs />
      <header className="relative flex h-[34px] items-center bg-[#212121]">
        <svg viewBox="0 0 12 2" className="ml-[11px] mt-px h-0.5 w-3" fill="#a6a6a6">
          <path d="M0 0h2v2H0zM5 0h2v2H5zM10 0h2v2h-2z" />
        </svg>
        <div className="ml-[418px] flex w-[416px] justify-between text-[13px] font-semibold text-[#2c2c2c]">
          <span>~/Docu</span>
          <span>- Lite XL</span>
        </div>
        <div className="absolute left-[490px] w-[320px] whitespace-nowrap text-[13px] font-semibold tracking-[0.01px] text-[#a9a9a9]">
          absensi_kelas_5a_semester1.xlsx - LibreOffice Calc
        </div>
        <svg viewBox="0 0 80 14" className="ml-auto mr-[10px] h-3.5 w-20" fill="none" stroke="#cfcfcf">
          <path d="M0 11.500h10M34.500 5.500h7v7h-7zM36.500 5.500v-3h7v7h-2M68.500 2.500l9 9M77.500 2.500l-9 9" />
        </svg>
      </header>
      <nav className="flex h-7 items-center bg-[#2d2d2d] pl-2 text-[13px] text-[#dadada]">
        {menus.map(([t, w]) => (
          <div key={t} className={`${w} shrink-0 pt-0.5 tracking-[-0.03px]`}>{t}</div>
        ))}
        <div className="ml-auto flex h-7 w-9 items-center justify-center bg-[#383838]">
          <svg viewBox="0 0 8 8" className="h-2 w-2" stroke="#dcdcdc" strokeWidth="1.300"><path d="M0 0l8 8M8 0L0 8" /></svg>
        </div>
      </nav>
      <StandardBar />
      <FormatBar />
      <main className="flex h-[567px]">
        <div className="w-[1319px] shrink-0">
          <FormulaBar />
          <Sheet />
          <Bottom />
        </div>
        <Sidebar />
      </main>
    </div>
  );
}
